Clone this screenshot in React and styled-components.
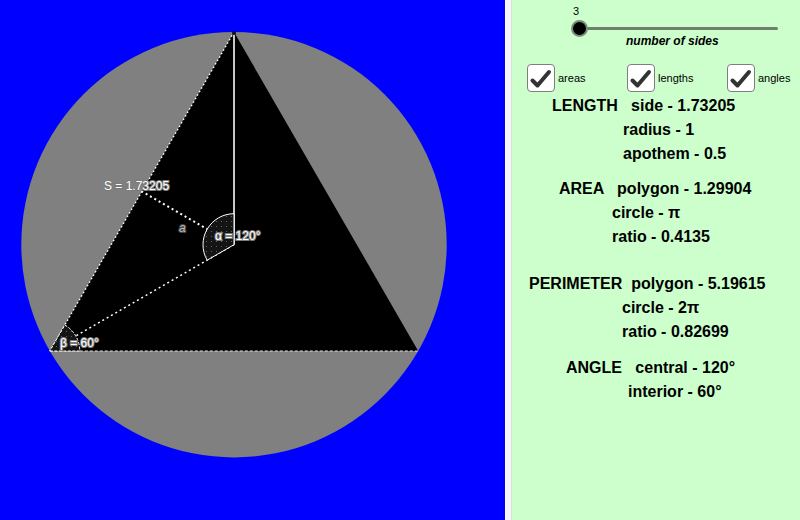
import React from "react";
import styled, { createGlobalStyle } from "styled-components";

const Global = createGlobalStyle`
  html, body { margin: 0; padding: 0; overflow: hidden; background: #fff; }
  body { font-family: "Liberation Sans", Arial, sans-serif; }
`;

const Page = styled.div`
  display: flex;
  width: 800px;
  height: 520px;
`;

const Canvas = styled.div`
  width: 505px;
  height: 520px;
  background: #0000ff;
  flex: none;
`;

const Divider = styled.div`
  width: 7px;
  height: 520px;
  flex: none;
  box-sizing: border-box;
  background: #f6f6f6;
  border-left: 1px solid #ffffff;
  border-right: 1px solid #dedede;
`;

const Panel = styled.div`
  flex: 1;
  height: 520px;
  background: #ccffcc;
  display: flex;
  flex-direction: column;
`;

const SliderBlock = styled.div`
  position: relative;
  height: 50px;
  flex: none;
`;

const SliderValue = styled.div`
  position: absolute;
  left: 61px;
  top: 5px;
  font-size: 11px;
  color: #000;
`;

const Track = styled.div`
  position: absolute;
  left: 67px;
  top: 27px;
  width: 199px;
  height: 3px;
  background: #6f7f6f;
  border-radius: 2px;
`;

const Knob = styled.div`
  position: absolute;
  left: 59px;
  top: 20px;
  width: 13px;
  height: 13px;
  border-radius: 50%;
  background: #000;
  border: 2px solid #7c8c7c;
`;

const Caption = styled.div`
  position: absolute;
  left: 114px;
  top: 34px;
  font-size: 12px;
  font-weight: bold;
  font-style: italic;
  color: #000;
`;

const CheckRow = styled.div`
  display: flex;
  padding-left: 15px;
  margin-top: 13px;
  height: 28px;
  flex: none;
`;

const CheckItem = styled.div`
  width: 100px;
  display: flex;
  align-items: center;
  gap: 3px;
  font-size: 11px;
  color: #000;
  padding-top: 2px;
`;

const Box = styled.div`
  width: 28px;
  height: 28px;
  box-sizing: border-box;
  border: 1.5px solid #7f7f7f;
  border-radius: 4px;
  background: #fff;
  display: flex;
  align-items: center;
  justify-content: center;
`;

const Group = styled.div`
  margin-top: ${(p) => p.$gap}px;
  display: flex;
  flex-direction: column;
`;

const Line = styled.div`
  font-size: 16px;
  font-weight: bold;
  line-height: 24px;
  height: 24px;
  white-space: pre;
  color: #000;
  padding-left: ${(p) => p.$x - 512}px;
`;

const Check = ({ label }) => (
  <CheckItem>
    <Box>
      <svg width="26" height="26" viewBox="0 0 26 26">
        <path
          d="M4.5 15.5 L9.5 20.5 L21 7"
          fill="none"
          stroke="#333"
          strokeWidth="4"
          strokeLinecap="round"
          strokeLinejoin="round"
        />
      </svg>
    </Box>
    {label}
  </CheckItem>
);

const cx = 234;
const cy = 244.7;
const R = 212.7;
const top = [234, 32];
const bl = [49.8, 351];
const br = [418.2, 351];
const mid = [(top[0] + bl[0]) / 2, (top[1] + bl[1]) / 2];

const labelStyle = {
  fill: "#ffffff",
  stroke: "#7a7a7a",
  strokeWidth: 2.2,
  paintOrder: "stroke",
  fontFamily: '"Liberation Sans", Arial, sans-serif',
  fontSize: 12,
};

const Drawing = () => (
  <svg width="505" height="520" viewBox="0 0 505 520">
    <defs>
      <pattern id="dots" width="5" height="5" patternUnits="userSpaceOnUse">
        <rect width="5" height="5" fill="#141414" />
        <circle cx="1.5" cy="1.5" r="0.6" fill="#6a6a6a" />
      </pattern>
    </defs>
    <circle cx={cx} cy={cy} r={R} fill="#808080" />
    <polygon points={`${top} ${bl} ${br}`} fill="#000" />
    <line x1={top[0]} y1={top[1]} x2={bl[0]} y2={bl[1]} stroke="#fff" strokeWidth="1.4" strokeDasharray="1.5 2.5" />
    <line x1={bl[0]} y1={bl[1]} x2={br[0]} y2={br[1]} stroke="#ddd" strokeWidth="1.2" strokeDasharray="3 2" />
    <line x1={cx} y1={top[1]} x2={cx} y2={cy} stroke="#c8c8c8" strokeWidth="2" />
    <line x1={cx} y1={cy} x2={mid[0]} y2={mid[1]} stroke="#fff" strokeWidth="2" strokeDasharray="2 3" />
    <line x1={cx} y1={cy} x2={bl[0]} y2={bl[1]} stroke="#fff" strokeWidth="1.5" strokeDasharray="2 3" />
    <path
      d={`M${cx} ${cy} L${cx} ${cy - 31} A31 31 0 0 0 ${cx - 31 * 0.866} ${cy + 31 * 0.5} Z`}
      fill="url(#dots)"
      stroke="#fff"
      strokeWidth="1"
    />
    <path
      d={`M${bl[0]} ${bl[1]} L${bl[0] + 30} ${bl[1]} A30 30 0 0 0 ${bl[0] + 15} ${bl[1] - 30 * 0.866} Z`}
      fill="url(#dots)"
      stroke="#fff"
      strokeWidth="1"
      strokeDasharray="3 1.5"
    />
    <circle cx={top[0]} cy={top[1] + 1} r="2" fill="#111" />
    <text x="104" y="190" style={labelStyle}>S = 1.73205</text>
    <text x="179" y="232" style={{ ...labelStyle, fontStyle: "italic", fontSize: 12, fill: "#bbb", stroke: "#444" }}>a</text>
    <text x="215" y="240" style={labelStyle}>α = 120°</text>
    <text x="60" y="347" style={labelStyle}>β = 60°</text>
  </svg>
);

export default function App() {
  return (
    <Page>
      <Global />
      <Canvas>
        <Drawing />
      </Canvas>
      <Divider />
      <Panel>
        <SliderBlock>
          <SliderValue>3</SliderValue>
          <Track />
          <Knob />
          <Caption>number of sides</Caption>
        </SliderBlock>
        <CheckRow>
          <Check label="areas" />
          <Check label="lengths" />
          <Check label="angles" />
        </CheckRow>
        <Group $gap={3}>
          <Line $x={552}>LENGTH   side - 1.73205</Line>
          <Line $x={623}>radius - 1</Line>
          <Line $x={623}>apothem - 0.5</Line>
        </Group>
        <Group $gap={11}>
          <Line $x={559}>AREA   polygon - 1.29904</Line>
          <Line $x={612}>circle - π</Line>
          <Line $x={612}>ratio - 0.4135</Line>
        </Group>
        <Group $gap={23}>
          <Line $x={529}>PERIMETER  polygon - 5.19615</Line>
          <Line $x={622}>circle - 2π</Line>
          <Line $x={622}>ratio - 0.82699</Line>
        </Group>
        <Group $gap={12}>
          <Line $x={566}>ANGLE   central - 120°</Line>
          <Line $x={628}>interior - 60°</Line>
        </Group>
      </Panel>
    </Page>
  );
}
